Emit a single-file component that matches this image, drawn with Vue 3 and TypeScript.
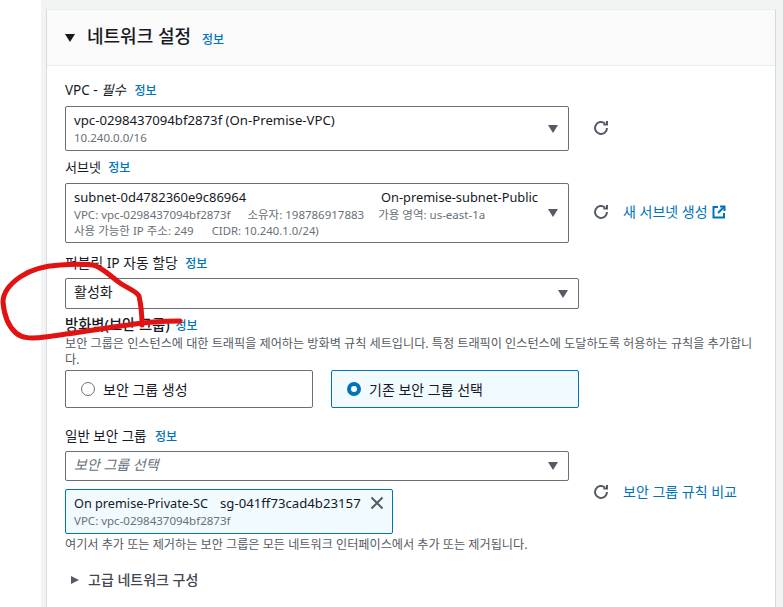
<script setup lang="ts">
const info = '정보'
const scribble = 'M 180 321 C 160 321 140 323 128 325 C 100 329 70 334 45 337 C 30 339 22 338 16 333 C 8 326 4 314 3 302 C 3 292 10 284 20 277 C 30 270 42 266 60 265 C 72 264 85 264 93 265 C 102 267 110 276 120 283 C 127 288 136 291 139 296 C 141 305 142 315 142 325'
</script>

<template>
  <div class="page">
    <section class="card">
      <header class="card-head">
        <span class="tri-down"></span>
        <h2>네트워크 설정</h2>
        <a class="info head-info">{{ info }}</a>
      </header>
      <div class="card-body">
        <div class="label l-vpc">VPC - <i>필수</i> <a class="info">{{ info }}</a></div>
        <div class="row">
          <div class="select s-vpc">
            <div class="main vpc-main">vpc-0298437094bf2873f (On-Premise-VPC)</div>
            <div class="sub">10.240.0.0/16</div>
            <span class="caret"></span>
          </div>
          <svg class="refresh" viewBox="0 0 16 16"><path d="M14 8a6 6 0 1 1-2-4.5" /><path d="M14 1v3.6h-3.6" /></svg>
        </div>
        <div class="label l-subnet">서브넷 <a class="info">{{ info }}</a></div>
        <div class="row">
          <div class="select s-subnet">
            <div class="main split"><span>subnet-0d4782360e9c86964</span><span class="right-name">On-premise-subnet-Public</span></div>
            <div class="sub split"><span>VPC: vpc-0298437094bf2873f</span><span class="owner">소유자: 198786917883</span><span class="az">가용 영역: us-east-1a</span></div>
            <div class="sub">사용 가능한 IP 주소: 249 <span class="cidr">CIDR: 10.240.1.0/24)</span></div>
            <span class="caret"></span>
          </div>
          <svg class="refresh" viewBox="0 0 16 16"><path d="M14 8a6 6 0 1 1-2-4.5" /><path d="M14 1v3.6h-3.6" /></svg>
          <a class="link">새 서브넷 생성</a>
          <svg class="ext" viewBox="0 0 14 14"><path d="M6 2H1.5v10.5H12V8" /><path d="M8 1.5h4.5V6" /><path d="M12.2 1.8 6 8" /></svg>
        </div>
        <div class="label l-ip">퍼블릭 IP 자동 할당 <a class="info">{{ info }}</a></div>
        <div class="select s-ip"><div class="main ko">활성화</div><span class="caret"></span></div>
        <div class="label l-fw">방화벽(보안 그룹) <a class="info">{{ info }}</a></div>
        <p class="desc">보안 그룹은 인스턴스에 대한 트래픽을 제어하는 방화벽 규칙 세트입니다. 특정 트래픽이 인스턴스에 도달하도록 허용하는 규칙을 추가합니다.</p>
        <div class="tiles">
          <div class="tile"><span class="radio"></span>보안 그룹 생성</div>
          <div class="tile on"><span class="radio"></span>기존 보안 그룹 선택</div>
        </div>
        <div class="label l-sg">일반 보안 그룹 <a class="info">{{ info }}</a></div>
        <div class="row top">
          <div class="left">
            <div class="select s-sg"><div class="placeholder">보안 그룹 선택</div><span class="caret"></span></div>
            <div class="token">
              <div class="main"><span class="sg-name">On premise-Private-SC</span><span class="sgid">sg-041ff73cad4b23157</span></div>
              <div class="sub">VPC: vpc-0298437094bf2873f</div>
              <svg class="close" viewBox="0 0 14 14"><path d="M1.5 1.5l11 11M12.5 1.5l-11 11" /></svg>
            </div>
          </div>
          <div class="compare">
            <svg class="refresh" viewBox="0 0 16 16"><path d="M14 8a6 6 0 1 1-2-4.5" /><path d="M14 1v3.6h-3.6" /></svg>
            <a class="link">보안 그룹 규칙 비교</a>
          </div>
        </div>
        <p class="desc note">여기서 추가 또는 제거하는 보안 그룹은 모든 네트워크 인터페이스에서 추가 또는 제거됩니다.</p>
        <div class="adv"><span class="tri-right"></span>고급 네트워크 구성</div>
      </div>
    </section>
    <svg class="scribble" width="200" height="90" viewBox="0 255 200 90"><path :d="scribble" /></svg>
  </div>
</template>

<style>
html, body { margin: 0; background: #fff; }
</style>

<style scoped>
.page {
  position: relative;
  width: 783px;
  height: 607px;
  overflow: hidden;
  box-sizing: border-box;
  padding: 9px 7px 0 46px;
  background: linear-gradient(#fff, #fff) left / 41px 100% no-repeat, #f2f3f3;
  font-family: "Noto Sans", "Noto Sans CJK KR", sans-serif;
  font-size: 13px;
  color: #16191f;
}
.card {
  height: 620px;
  box-sizing: border-box;
  background: #fff;
  border: 1px solid #d5dbdb;
  border-top-color: #eaeded;
}
.card-head {
  height: 56px;
  box-sizing: border-box;
  display: flex;
  align-items: center;
  padding-left: 18px;
  background: #fafafa;
  border-bottom: 1px solid #eaeded;
}
.card-head h2 { margin: 0 8px 3px 12px; font-size: 18px; font-weight: 500; line-height: 22px; }
.tri-down { width: 0; height: 0; border: 5px solid transparent; border-top: 8px solid #16191f; border-bottom: 0; }
.info { color: #0073bb; font-size: 12px; font-weight: 500; margin-left: 3px; }
.head-info { margin-top: 2px; }
.card-body { padding: 0 0 0 18px; }
.label { font-size: 13.5px; line-height: 18px; height: 18px; white-space: nowrap; }
.label i { font-style: italic; }
.l-vpc { margin-top: 15px; }
.l-vpc .info, .l-sg .info { margin-left: 5px; }
.l-subnet { margin-top: 7px; font-size: 13px; }
.l-subnet .info { margin-left: 4px; }
.l-ip { margin-top: 11px; font-size: 13.8px; }
.l-ip .info { margin-left: 4px; }
.l-fw { margin-top: 7px; font-size: 14.3px; font-weight: 500; }
.l-fw .info { margin-left: 2px; }
.l-sg { margin-top: 19px; font-size: 13.5px; }
.row { display: flex; align-items: center; margin-top: 7px; }
.row.top { align-items: flex-start; margin-top: 6px; }
.select {
  position: relative;
  width: 504px;
  box-sizing: border-box;
  padding: 3px 8px;
  border: 1px solid #687078;
  border-radius: 2px;
  background: #fff;
  flex: none;
}
.s-vpc { height: 45px; }
.s-subnet { height: 60px; }
.s-ip { width: 514px; height: 31px; margin-top: 6px; }
.s-sg { height: 30px; }
.main { font-size: 13px; line-height: 20px; white-space: nowrap; }
.vpc-main { font-size: 13.2px; }
.ko { font-size: 14px; }
.sub { font-size: 11.5px; line-height: 16px; color: #687078; white-space: nowrap; }
.split { display: flex; }
.right-name { position: absolute; left: 315px; font-size: 12.8px; }
.owner { margin-left: 17px; }
.az { margin-left: 14px; }
.cidr { margin-left: 15px; font-size: 11.3px; }
.placeholder { font-size: 14px; line-height: 20px; font-style: italic; color: #687078; }
.caret {
  position: absolute;
  right: 10px;
  top: 50%;
  margin-top: -4px;
  border: 5px solid transparent;
  border-top: 8px solid #545b64;
  border-bottom: 0;
}
.refresh { width: 16px; height: 16px; margin: 0 0 2px 24px; flex: none; fill: none; stroke: #545b64; stroke-width: 2; }
.link { color: #0073bb; font-size: 14px; margin: 0 0 4px 14px; white-space: nowrap; }
.ext { width: 14px; height: 14px; margin: 0 0 2px 4px; fill: none; stroke: #0073bb; stroke-width: 2; }
.desc { margin: 2px 0 0; font-size: 12.15px; line-height: 16px; color: #545b64; width: 690px; }
.tiles { display: flex; gap: 18px; margin-top: 2px; }
.tile {
  width: 248px;
  height: 38px;
  box-sizing: border-box;
  display: flex;
  align-items: center;
  padding: 0 0 1px 15px;
  border: 1px solid #687078;
  border-radius: 2px;
  font-size: 14px;
}
.tile.on { background: #f1faff; border-color: #0073bb; }
.radio { width: 14px; height: 14px; box-sizing: border-box; margin-right: 8px; border: 1.5px solid #687078; border-radius: 50%; }
.on .radio { border: 4px solid #0073bb; background: #fff; }
.left { width: 504px; flex: none; }
.token {
  position: relative;
  width: 328px;
  height: 45px;
  box-sizing: border-box;
  margin-top: 8px;
  padding: 3px 8px;
  background: #f1faff;
  border: 1px solid #0073bb;
  border-radius: 2px;
}
.sg-name { font-size: 12.7px; }
.sgid { margin-left: 12px; font-size: 13.2px; }
.close { position: absolute; right: 8px; top: 6px; width: 14px; height: 14px; fill: none; stroke: #545b64; stroke-width: 2; }
.compare { display: flex; align-items: center; margin-top: 30px; }
.note { margin-top: 3px; }
.adv { display: flex; align-items: center; line-height: 20px; margin-top: 17px; margin-left: 6px; font-size: 14px; font-weight: 500; color: #414750; }
.tri-right { margin-right: 9px; border: 4.5px solid transparent; border-left: 8px solid #545b64; border-right: 0; }
.scribble { position: absolute; left: 0; top: 255px; fill: none; stroke: #e31212; stroke-width: 5; stroke-linecap: round; stroke-linejoin: round; }
</style>
